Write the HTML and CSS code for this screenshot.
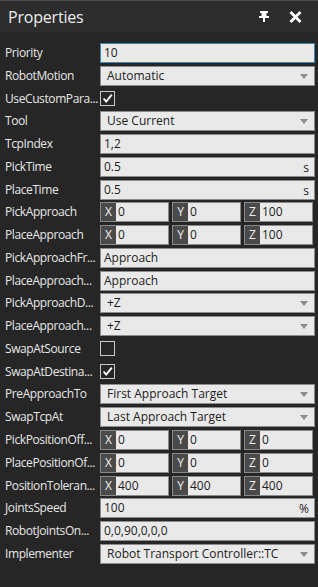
FILE: index.html
```html
<!DOCTYPE html>
<html lang="en">
<head>
  <meta charset="UTF-8" />
  <title>Properties</title>
  <link rel="stylesheet" href="styles.css">
</head>
<body>
  <div class="panel">

    <!-- cabeçalho -->
    <div class="head">
      <span class="head__title">Properties</span>
      <span class="head__icons">
        <svg class="pin" width="10" height="11" viewBox="0 0 10 11">
          <rect x="1" y="0" width="8" height="2" fill="#fff"/>
          <rect x="2.5" y="2" width="5" height="3" fill="#fff"/>
          <rect x="0" y="5" width="10" height="2" fill="#fff"/>
          <rect x="4" y="7" width="2" height="4" fill="#fff"/>
        </svg>
        <svg class="close" width="13" height="12" viewBox="0 0 13 12">
          <path d="M1.5 1 L11.5 11 M11.5 1 L1.5 11" stroke="#fff" stroke-width="2.8" fill="none"/>
        </svg>
      </span>
    </div>

    <!-- grade de propriedades -->
    <div class="props">
      <div class="lbl">Priority</div>
      <div class="box focus">10</div>

      <div class="lbl">RobotMotion</div>
      <div class="box combo">Automatic</div>

      <div class="lbl">UseCustomPara...</div>
      <div class="chk on"><svg viewBox="0 0 15 15"><path d="M3 7.5 L6 11 L12.5 3" stroke="#fff" stroke-width="2.2" fill="none"/></svg></div>

      <div class="lbl">Tool</div>
      <div class="box combo">Use Current</div>

      <div class="lbl">TcpIndex</div>
      <div class="box">1,2</div>

      <div class="lbl">PickTime</div>
      <div class="box unit">0.5<span>s</span></div>

      <div class="lbl">PlaceTime</div>
      <div class="box unit">0.5<span>s</span></div>

      <div class="lbl">PickApproach</div>
      <div class="xyz">
        <div class="cell"><b>X</b><span>0</span></div>
        <div class="cell"><b>Y</b><span>0</span></div>
        <div class="cell"><b>Z</b><span>100</span></div>
      </div>

      <div class="lbl">PlaceApproach</div>
      <div class="xyz">
        <div class="cell"><b>X</b><span>0</span></div>
        <div class="cell"><b>Y</b><span>0</span></div>
        <div class="cell"><b>Z</b><span>100</span></div>
      </div>

      <div class="lbl">PickApproachFr...</div>
      <div class="box">Approach</div>

      <div class="lbl">PlaceApproach...</div>
      <div class="box">Approach</div>

      <div class="lbl">PickApproachD...</div>
      <div class="box combo">+Z</div>

      <div class="lbl">PlaceApproach...</div>
      <div class="box combo">+Z</div>

      <div class="lbl">SwapAtSource</div>
      <div class="chk"></div>

      <div class="lbl">SwapAtDestina...</div>
      <div class="chk on"><svg viewBox="0 0 15 15"><path d="M3 7.5 L6 11 L12.5 3" stroke="#fff" stroke-width="2.2" fill="none"/></svg></div>

      <div class="lbl">PreApproachTo</div>
      <div class="box combo">First Approach Target</div>

      <div class="lbl">SwapTcpAt</div>
      <div class="box combo">Last Approach Target</div>

      <div class="lbl">PickPositionOff...</div>
      <div class="xyz">
        <div class="cell"><b>X</b><span>0</span></div>
        <div class="cell"><b>Y</b><span>0</span></div>
        <div class="cell"><b>Z</b><span>0</span></div>
      </div>

      <div class="lbl">PlacePositionOf...</div>
      <div class="xyz">
        <div class="cell"><b>X</b><span>0</span></div>
        <div class="cell"><b>Y</b><span>0</span></div>
        <div class="cell"><b>Z</b><span>0</span></div>
      </div>

      <div class="lbl">PositionToleran...</div>
      <div class="xyz">
        <div class="cell"><b>X</b><span>400</span></div>
        <div class="cell"><b>Y</b><span>400</span></div>
        <div class="cell"><b>Z</b><span>400</span></div>
      </div>

      <div class="lbl">JointsSpeed</div>
      <div class="box unit">100<span>%</span></div>

      <div class="lbl">RobotJointsOn...</div>
      <div class="box">0,0,90,0,0,0</div>

      <div class="lbl">Implementer</div>
      <div class="box combo">Robot Transport Controller::TC</div>
    </div>
  </div>
</body>
</html>
```

FILE: styles.css
```css
/* BASE ----------------------------------------------------------------*/
*,::before,::after{box-sizing:border-box;margin:0;padding:0}
html,body{height:100%}
body{
  font-family:"Open Sans","Noto Sans",sans-serif;
  background:#262626;
  color:#e8e8e8;
}

.panel{min-height:100%;background:#262626}

/* CABEÇALHO -----------------------------------------------------------*/
.head{
  height:32px;
  display:flex;
  align-items:center;
  justify-content:space-between;
  background:#2d2d2d;
  border-top:1px solid #4e4e4e;
  padding:0 16px 0 8px;
}
.head__title{font-size:16px;color:#ececec;letter-spacing:-.2px}
.head__icons{display:flex;align-items:center;gap:20px}
.head__icons svg{display:block}

/* GRADE ---------------------------------------------------------------*/
.props{
  display:grid;
  grid-template-columns:95px 1fr;
  grid-auto-rows:20px;
  row-gap:2.77px;
  padding:11px 3px 0 5px;
}
.lbl{
  font-size:12px;
  line-height:20px;
  white-space:nowrap;
  color:#e6e6e6;
  letter-spacing:-.4px;
}

/* CAIXAS --------------------------------------------------------------*/
.box{
  position:relative;
  background:#e9e9e9;
  border:1px solid #8c8c8c;
  color:#1c1c1c;
  font-size:12px;
  line-height:18px;
  padding-left:3px;
  white-space:nowrap;
  overflow:hidden;
}
.box.focus{border-color:#3d86ad}
.box.combo{padding-left:6px}
.box.combo::after{                   /* setinha do combo */
  content:"";
  position:absolute;
  right:6px;top:7px;
  border-left:4px solid transparent;
  border-right:4px solid transparent;
  border-top:5px solid #8d8d8d;
}
.box.unit span{position:absolute;right:5px;top:1px}

/* CHECKBOX ------------------------------------------------------------*/
.chk{
  align-self:center;
  width:15px;height:15px;
  border:1px solid #c9c9c9;
  background:#262626;
}
.chk svg{display:block;width:13px;height:13px}

/* X Y Z ---------------------------------------------------------------*/
.xyz{display:grid;grid-template-columns:repeat(3,1fr);gap:3px;padding-right:2px}
.cell{
  display:flex;
  border:1px solid #8a8a8a;
  background:#e9e9e9;
  font-size:12px;
  line-height:18px;
  overflow:hidden;
}
.cell b{
  font-weight:400;
  width:15px;
  flex-shrink:0;
  background:#4a4a4a;
  color:#f0f0f0;
  text-align:center;
}
.cell span{color:#1c1c1c;padding-left:2px}
```
